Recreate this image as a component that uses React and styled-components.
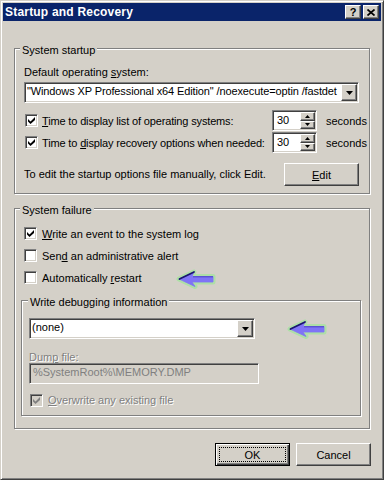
import React from 'react';
import styled, { createGlobalStyle, css } from 'styled-components';

// classic win2k palette
// face #D4D0C8, shadow #808080, dark #404040, caption #0A246A

const GlobalStyle = createGlobalStyle`
  html, body {
    margin: 0;
    padding: 0;
    background: #D4D0C8;
  }
  body {
    font-family: "Liberation Sans", Arial, sans-serif;
    font-size: 11px;
    color: #000;
  }
  * {
    box-sizing: border-box;
  }
`;

const sunken = css`
  border: 1px solid;
  border-color: #808080 #fff #fff #808080;
  box-shadow: inset 1px 1px 0 #404040, inset -1px -1px 0 #D4D0C8;
`;

const raised = css`
  border: 1px solid;
  border-color: #fff #404040 #404040 #fff;
  box-shadow: inset -1px -1px 0 #808080;
`;

const Window = styled.div`
  width: 384px;
  height: 480px;
  display: flex;
  flex-direction: column;
  padding: 2px;
  background: #D4D0C8;
  border: 1px solid;
  border-color: #D4D0C8 #404040 #404040 #D4D0C8;
  box-shadow: inset 1px 1px 0 #fff, inset -1px -1px 0 #808080;
`;

const TitleBar = styled.div`
  height: 18px;
  display: flex;
  align-items: center;
  padding: 0 2px;
  background: #0A246A;
  color: #fff;
`;

const Title = styled.div`
  flex: 1;
  font-size: 12px;
  font-weight: bold;
  line-height: 18px;
  letter-spacing: 0.2px;
  white-space: nowrap;
`;

const CaptionButton = styled.div`
  width: 16px;
  height: 14px;
  margin-left: 2px;
  display: flex;
  align-items: center;
  justify-content: center;
  background: #D4D0C8;
  color: #000;
  font-weight: bold;
  font-size: 11px;
  line-height: 12px;
  ${raised};
`;

const Body = styled.div`
  display: flex;
  flex-direction: column;
  padding: 27px 11px 0 11px;
`;

const GroupBox = styled.div`
  display: flex;
  flex-direction: column;
  margin-top: ${p => p.$mt || 0}px;
  padding: 0 ${p => p.$pr}px ${p => p.$pb}px ${p => p.$pl}px;
  border: 1px solid #808080;
  box-shadow: 1px 1px 0 #fff, inset 1px 1px 0 #fff;
`;

const Legend = styled.div`
  align-self: flex-start;
  margin: -5px 0 0 ${p => p.$indent}px;
  padding: 0 2px;
  background: #D4D0C8;
  line-height: 13px;
  white-space: nowrap;
`;

const Label = styled.div`
  margin-top: ${p => p.$mt || 0}px;
  line-height: ${p => p.$lh || 13}px;
  white-space: nowrap;
  ${p => p.$disabled && css`
    color: #808080;
    text-shadow: 1px 1px 0 #fff;
  `}
`;

const Key = styled.span`
  text-decoration: underline;
`;

const Combo = styled.div`
  position: relative;
  width: ${p => p.$w}px;
  height: 21px;
  margin-top: ${p => p.$mt || 0}px;
  display: flex;
  padding: 1px;
  background: #fff;
  ${sunken};
`;

const ComboText = styled.div`
  flex: 1;
  overflow: hidden;
  white-space: nowrap;
  padding-left: 1px;
  line-height: 15px;
  letter-spacing: ${p => p.$tight ? '-0.12px' : 'normal'};
`;

const DropButton = styled.div`
  width: 16px;
  flex-shrink: 0;
  display: flex;
  align-items: center;
  justify-content: center;
  background: #D4D0C8;
  ${raised};
`;

const TextField = styled.div`
  width: ${p => p.$w}px;
  height: 21px;
  padding: 1px 1px 1px 3px;
  line-height: 15px;
  white-space: nowrap;
  background: ${p => (p.$disabled ? '#D4D0C8' : '#fff')};
  color: ${p => (p.$disabled ? '#808080' : '#000')};
  ${sunken};
`;

const CheckRow = styled.div`
  position: relative;
  display: flex;
  align-items: center;
  gap: 5px;
  height: 13px;
  margin-top: ${p => p.$mt || 0}px;
  margin-left: ${p => p.$ml || 0}px;
`;

const Box = styled.span`
  width: 13px;
  height: 13px;
  flex-shrink: 0;
  display: flex;
  align-items: center;
  justify-content: center;
  background: ${p => (p.$disabled ? '#D4D0C8' : '#fff')};
  ${sunken};
`;

const TimeRow = styled.div`
  display: flex;
  align-items: center;
  height: 21px;
  margin-top: ${p => p.$mt || 0}px;
  padding-left: 1px;
`;

const TimeText = styled.div`
  width: 230px;
  margin-left: 4px;
  flex-shrink: 0;
  white-space: nowrap;
  letter-spacing: -0.15px;
`;

const Spin = styled.div`
  width: 45px;
  height: 21px;
  flex-shrink: 0;
  display: flex;
  padding: 1px;
  background: #fff;
  ${sunken};
`;

const SpinValue = styled.div`
  flex: 1;
  padding-left: 3px;
  line-height: 16px;
`;

const SpinButtons = styled.div`
  width: 15px;
  display: flex;
  flex-direction: column;
`;

const SpinButton = styled.div`
  flex: 1;
  display: flex;
  align-items: center;
  justify-content: center;
  background: #D4D0C8;
  ${raised};
`;

const Unit = styled.div`
  margin-left: 9px;
  white-space: nowrap;
`;

const EditRow = styled.div`
  display: flex;
  align-items: center;
  justify-content: space-between;
  margin-top: 10px;
`;

const Button = styled.button`
  width: 75px;
  height: 23px;
  padding: 0;
  position: relative;
  font-family: inherit;
  font-size: 11px;
  color: #000;
  background: #D4D0C8;
  ${raised};
  ${p => p.$default && css`
    border: 1px solid #000;
    box-shadow: inset 1px 1px 0 #fff, inset -1px -1px 0 #404040, inset -2px -2px 0 #808080;
    &::after {
      content: '';
      position: absolute;
      left: 3px;
      top: 3px;
      right: 3px;
      bottom: 3px;
      border: 1px dotted #000;
    }
  `}
`;

const ButtonBar = styled.div`
  display: flex;
  justify-content: flex-end;
  gap: 6px;
  margin: 14px -1px 0 0;
`;

const Marker = styled.svg`
  position: absolute;
  left: ${p => p.$left}px;
  top: ${p => p.$top}px;
  overflow: visible;
`;

const arrowShape = 'M2 10 L17 3 L15 7.5 L36 7.5 L36 13 L15 13 L18 17.5 Z';

function Arrow({ left, top }) {
  return (
    <Marker $left={left} $top={top} width="40" height="20" viewBox="0 0 40 20">
      <path d={arrowShape} fill="#9FE69A" stroke="#9FE69A" strokeWidth="5" strokeLinejoin="round" opacity="0.7" />
      <path d={arrowShape} fill="#7F73F6" stroke="#7F73F6" strokeWidth="0.8" strokeLinejoin="round" />
      <path d="M2.5 10 L17 3" stroke="#1A1670" strokeWidth="1.8" strokeLinecap="round" />
      <path d="M16 7.8 L36 7.8" stroke="#4B40C8" strokeWidth="1" />
    </Marker>
  );
}

function Check({ disabled }) {
  return (
    <svg width="7" height="7" viewBox="0 0 7 7">
      <path d="M0 2 L2.5 4.5 L7 0 L7 3 L2.5 7 L0 4.5 Z" fill={disabled ? '#808080' : '#000'} />
    </svg>
  );
}

function CheckBox({ checked, disabled }) {
  return <Box $disabled={disabled}>{checked && <Check disabled={disabled} />}</Box>;
}

function DropArrow() {
  return (
    <svg width="7" height="4" viewBox="0 0 7 4">
      <path d="M0 0 H7 L3.5 4 Z" fill="#000" />
    </svg>
  );
}

function Tri({ up }) {
  return (
    <svg width="5" height="3" viewBox="0 0 5 3">
      <path d={up ? 'M0 3 H5 L2.5 0 Z' : 'M0 0 H5 L2.5 3 Z'} fill="#000" />
    </svg>
  );
}

function SpinBox({ value }) {
  return (
    <Spin>
      <SpinValue>{value}</SpinValue>
      <SpinButtons>
        <SpinButton><Tri up /></SpinButton>
        <SpinButton><Tri /></SpinButton>
      </SpinButtons>
    </Spin>
  );
}

export default function App() {
  return (
    <>
      <GlobalStyle />
      <Window>
        <TitleBar>
          <Title>Startup and Recovery</Title>
          <CaptionButton>?</CaptionButton>
          <CaptionButton>
            <svg width="8" height="7" viewBox="0 0 8 7">
              <path d="M0.5 0.5 L7.5 6.5 M7.5 0.5 L0.5 6.5" stroke="#000" strokeWidth="1.7" />
            </svg>
          </CaptionButton>
        </TitleBar>

        <Body>
          <GroupBox $pl={9} $pr={10} $pb={7}>
            <Legend $indent={-4}>System startup</Legend>
            <Label $mt={9}>Default operating <Key>s</Key>ystem:</Label>
            <Combo $w={335} $mt={3}>
              <ComboText $tight>"Windows XP Professional x64 Edition" /noexecute=optin /fastdet</ComboText>
              <DropButton><DropArrow /></DropButton>
            </Combo>
            <TimeRow $mt={7}>
              <CheckBox checked />
              <TimeText><Key>T</Key>ime to display list of operating systems:</TimeText>
              <SpinBox value="30" />
              <Unit>seconds</Unit>
            </TimeRow>
            <TimeRow $mt={1}>
              <CheckBox checked />
              <TimeText>Time to <Key>d</Key>isplay recovery options when needed:</TimeText>
              <SpinBox value="30" />
              <Unit>seconds</Unit>
            </TimeRow>
            <EditRow>
              <Label>To edit the startup options file manually, click Edit.</Label>
              <Button><Key>E</Key>dit</Button>
            </EditRow>
          </GroupBox>

          <GroupBox $mt={14} $pl={6} $pr={8} $pb={12}>
            <Legend $indent={-1}>System failure</Legend>
            <CheckRow $mt={10} $ml={3}>
              <CheckBox checked />
              <span><Key>W</Key>rite an event to the system log</span>
            </CheckRow>
            <CheckRow $mt={9} $ml={3}>
              <CheckBox />
              <span>Sen<Key>d</Key> an administrative alert</span>
            </CheckRow>
            <CheckRow $mt={9} $ml={3}>
              <CheckBox />
              <span>Automatically <Key>r</Key>estart</span>
              <Arrow left={153} top={-2} />
            </CheckRow>

            <GroupBox $mt={16} $pl={7} $pr={8} $pb={8}>
              <Legend $indent={-1}>Write debugging information</Legend>
              <Combo $w={226} $mt={9}>
                <ComboText>(none)</ComboText>
                <DropButton><DropArrow /></DropButton>
                <Arrow left={258} top={0} />
              </Combo>
              <Label $mt={12} $lh={12} $disabled>Dum<Key>p</Key> file:</Label>
              <TextField $w={230} $disabled>%SystemRoot%\MEMORY.DMP</TextField>
              <CheckRow $mt={10} $ml={1}>
                <CheckBox checked disabled />
                <Label $disabled><Key>O</Key>verwrite any existing file</Label>
              </CheckRow>
            </GroupBox>
          </GroupBox>

          <ButtonBar>
            <Button $default>OK</Button>
            <Button>Cancel</Button>
          </ButtonBar>
        </Body>
      </Window>
    </>
  );
}
